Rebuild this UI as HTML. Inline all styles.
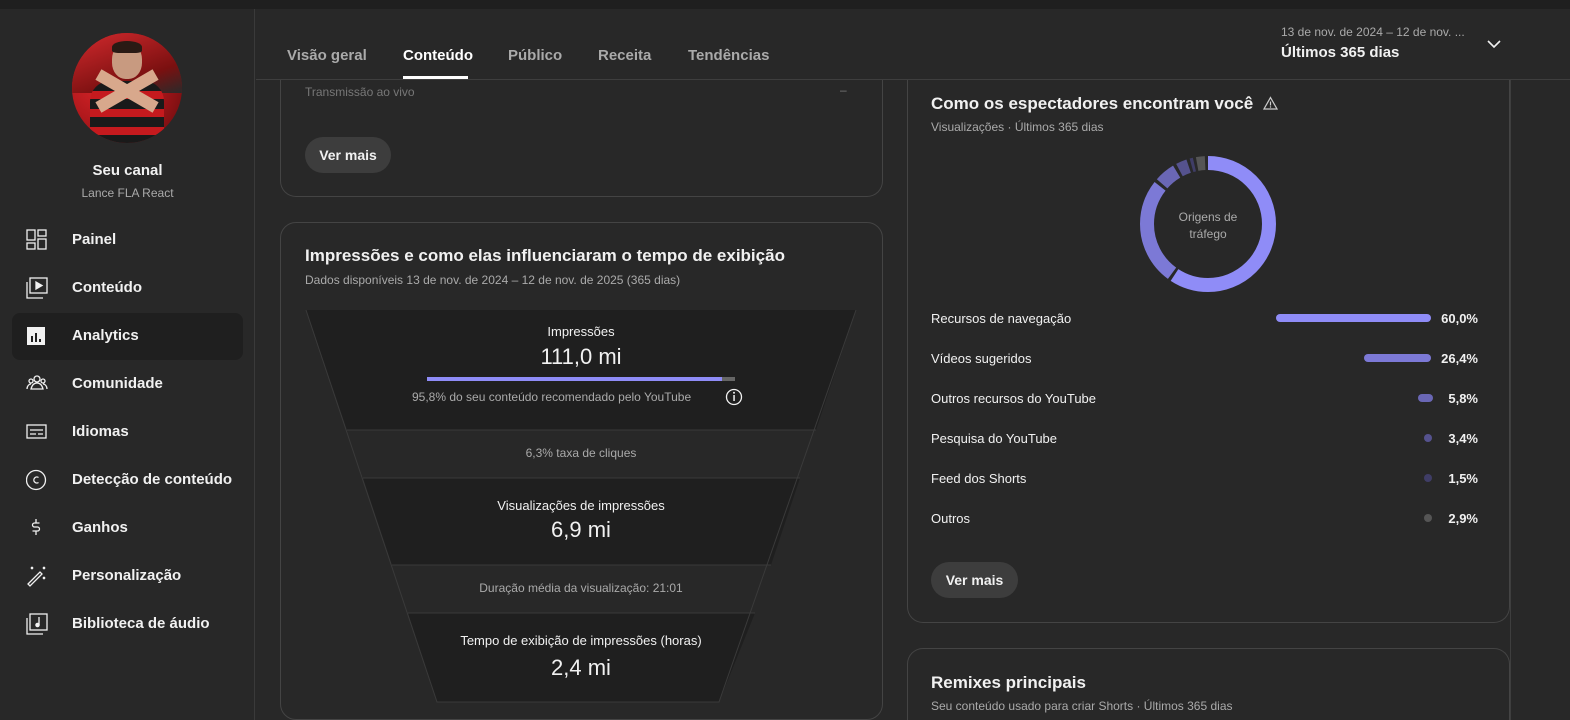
<!DOCTYPE html>
<html><head><meta charset="utf-8"><style>
*{box-sizing:border-box;margin:0;padding:0}
html,body{width:1570px;height:720px;overflow:hidden}
body{background:#282828;font-family:"Liberation Sans",sans-serif;color:#f1f1f1;position:relative}
.top{position:absolute;left:0;top:0;width:1570px;height:9px;background:#1f1f1f;z-index:5}
.side{position:absolute;left:0;top:9px;width:255px;height:711px;border-right:1px solid #3a3a3a}
.av{position:absolute;left:72px;top:33px;width:110px;height:110px;border-radius:50%;overflow:hidden;background:radial-gradient(circle at 30% 40%,#e0262a,#a01418 60%,#5a0c0c)}
.nav{position:absolute;left:0;width:255px;height:48px;font-size:15px;font-weight:bold;color:#f1f1f1}
.nav span{position:absolute;left:72px;top:15px}
.nav svg{position:absolute;left:26px;top:13px}
.abs{position:absolute}
.card{position:absolute;border:1px solid #444;border-radius:16px;background:#282828}
.btn{position:absolute;background:#3d3d3d;border-radius:18px;font-size:14px;font-weight:bold;color:#f1f1f1;text-align:center;line-height:36px}
.tab{position:absolute;top:47px;font-size:15px;font-weight:bold;color:#aaa}
.row{position:absolute;left:931px;font-size:13px;color:#f1f1f1}
.pct{position:absolute;right:92px;font-size:13px;color:#f1f1f1;font-weight:bold;text-align:right}
.bar{position:absolute;height:8px;border-radius:4px}
</style></head><body>
<div class="top"></div>
<div class="side">
  <div class="av" style="top:24px">
    <div class="abs" style="left:0;top:0;width:110px;height:60px;background:linear-gradient(160deg,#d42a2e,#7a1010 70%,#2a2a2a)"></div>
    <div class="abs" style="left:40px;top:10px;width:30px;height:36px;border-radius:45%;background:#c89a80"></div>
    <div class="abs" style="left:40px;top:8px;width:30px;height:12px;border-radius:50% 50% 20% 20%;background:#2a1a14"></div>
    <div class="abs" style="left:18px;top:48px;width:74px;height:70px;border-radius:20px 20px 0 0;background:repeating-linear-gradient(180deg,#1a1a1a 0 10px,#c51a1e 10px 18px)"></div>
    <div class="abs" style="left:22px;top:52px;width:66px;height:12px;background:#d8a88c;transform:rotate(30deg)"></div>
    <div class="abs" style="left:22px;top:52px;width:66px;height:12px;background:#d8a88c;transform:rotate(-30deg)"></div>
  </div>
  <div class="abs" style="left:0;width:255px;top:153px;text-align:center;font-size:15px;font-weight:bold">Seu canal</div>
  <div class="abs" style="left:0;width:255px;top:177px;text-align:center;font-size:12px;color:#aaa">Lance FLA React</div>
</div>
<div class="nav" style="top:216px"><svg width="22" height="22" viewBox="0 0 22 22" fill="none" stroke="#f1f1f1" stroke-width="1.3"><rect x="1" y="1" width="8" height="10"/><rect x="12" y="1" width="8" height="6"/><rect x="1" y="14" width="8" height="6"/><rect x="12" y="10" width="8" height="10"/></svg><span>Painel</span></div>
<div class="nav" style="top:264px"><svg width="22" height="22" viewBox="0 0 22 22" fill="none" stroke="#f1f1f1" stroke-width="1.3"><rect x="4" y="1" width="17" height="15"/><path d="M1 5v16h16"/><path d="M10 5l6 3.5-6 3.5z" fill="#f1f1f1"/></svg><span>Conteúdo</span></div>
<div class="abs" style="left:12px;top:313px;width:231px;height:47px;background:#1f1f1f;border-radius:8px"></div>
<div class="nav" style="top:312px"><svg width="22" height="22" viewBox="0 0 22 22"><rect x="1" y="2" width="18" height="18" fill="#f1f1f1"/><rect x="5" y="11" width="2" height="6" fill="#1f1f1f"/><rect x="9" y="8" width="2" height="9" fill="#1f1f1f"/><rect x="13" y="14" width="2" height="3" fill="#1f1f1f"/></svg><span>Analytics</span></div>
<div class="nav" style="top:360px"><svg width="22" height="22" viewBox="0 0 22 22" fill="none" stroke="#f1f1f1" stroke-width="1.3"><circle cx="11" cy="6" r="3"/><circle cx="5" cy="8" r="2"/><circle cx="17" cy="8" r="2"/><path d="M5 16c1-4 3-6 6-6s5 2 6 6zM1 16c0-3 2-5 4-5M21 16c0-3-2-5-4-5"/></svg><span>Comunidade</span></div>
<div class="nav" style="top:408px"><svg width="22" height="22" viewBox="0 0 22 22" fill="none" stroke="#f1f1f1" stroke-width="1.3"><rect x="1" y="4" width="19" height="13"/><path d="M4 9h13M4 13h6M12 13h5"/></svg><span>Idiomas</span></div>
<div class="nav" style="top:456px"><svg width="22" height="22" viewBox="0 0 22 22" fill="none" stroke="#f1f1f1" stroke-width="1.3"><circle cx="10" cy="11" r="9.5"/><path d="M12.5 8.5a3 3 0 1 0 0 5"/></svg><span>Detecção de conteúdo</span></div>
<div class="nav" style="top:504px"><svg width="22" height="22" viewBox="0 0 22 22" fill="none" stroke="#f1f1f1" stroke-width="1.3"><path d="M13.5 6h-5a2 2 0 0 0 0 4h3a2 2 0 0 1 0 4h-5M10 2v4M10 14v4"/></svg><span>Ganhos</span></div>
<div class="nav" style="top:552px"><svg width="22" height="22" viewBox="0 0 22 22" fill="none" stroke="#f1f1f1" stroke-width="1.3"><path d="M2 19l12-12 2 2-12 12z"/><path d="M5 2l2 2M7 2L5 4M17 2l2 2M19 2l-2 2M17 12l2 2M19 12l-2 2"/></svg><span>Personalização</span></div>
<div class="nav" style="top:600px"><svg width="22" height="22" viewBox="0 0 22 22" fill="none" stroke="#f1f1f1" stroke-width="1.3"><rect x="4" y="1" width="17" height="16"/><path d="M1 5v16h16"/><path d="M13 4v8" /><circle cx="11.5" cy="12" r="1.6" fill="#f1f1f1"/></svg><span>Biblioteca de áudio</span></div>

<div class="card" style="left:280px;top:40px;width:603px;height:157px;border-top:none;border-radius:0 0 16px 16px"></div>
<div class="card" style="left:907px;top:40px;width:603px;height:583px;border-top:none;border-radius:0 0 16px 16px"></div>

<div class="abs" style="left:256px;top:9px;width:1314px;height:70px;background:#282828"></div>
<div class="abs" style="left:256px;top:79px;width:1314px;height:1px;background:#3e3e3e"></div>
<div class="tab" style="left:287px">Visão geral</div>
<div class="tab" style="left:403px;color:#fff">Conteúdo</div>
<div class="abs" style="left:403px;top:76px;width:65px;height:3px;background:#fff"></div>
<div class="tab" style="left:508px">Público</div>
<div class="tab" style="left:598px">Receita</div>
<div class="tab" style="left:688px">Tendências</div>
<div class="abs" style="left:1281px;top:25px;font-size:12px;color:#aaa">13 de nov. de 2024 – 12 de nov. ...</div>
<div class="abs" style="left:1281px;top:44px;font-size:15px;font-weight:bold;color:#f1f1f1">Últimos 365 dias</div>
<svg class="abs" style="left:1486px;top:38px" width="16" height="12" viewBox="0 0 16 12"><path d="M2 3l6 6 6-6" fill="none" stroke="#f1f1f1" stroke-width="1.6"/></svg>
<div class="abs" style="left:1510px;top:80px;width:1px;height:640px;background:#3e3e3e"></div>

<div class="abs" style="left:305px;top:85px;font-size:12px;color:#777">Transmissão ao vivo</div>
<div class="abs" style="left:840px;top:83px;font-size:12px;color:#777">–</div>
<div class="btn" style="left:305px;top:137px;width:86px;height:36px">Ver mais</div>

<div class="card" style="left:280px;top:222px;width:603px;height:498px"></div>
<div class="abs" style="left:305px;top:246px;font-size:17px;font-weight:bold">Impressões e como elas influenciaram o tempo de exibição</div>
<div class="abs" style="left:305px;top:273px;font-size:12px;color:#aaa">Dados disponíveis 13 de nov. de 2024 – 12 de nov. de 2025 (365 dias)</div>
<svg class="abs" style="left:0;top:0" width="1570" height="720">
<polygon points="306,310 856,310 816,430 347,430" fill="#1f1f1f"/>
<polygon points="347,430 816,430 800,478 363,478" fill="#282828"/>
<polygon points="363,478 800,478 771,565 392,565" fill="#1f1f1f"/>
<polygon points="392,565 771,565 755,613 408,613" fill="#282828"/>
<polygon points="408,613 755,613 719,702 437,702" fill="#1f1f1f"/>
<polyline points="306,310 437,702 719,702 856,310" fill="none" stroke="#3a3a3a" stroke-width="1"/>
<line x1="347" y1="430" x2="816" y2="430" stroke="#3a3a3a"/>
<line x1="363" y1="478" x2="800" y2="478" stroke="#3a3a3a"/>
<line x1="392" y1="565" x2="771" y2="565" stroke="#3a3a3a"/>
<line x1="408" y1="613" x2="755" y2="613" stroke="#3a3a3a"/>
<rect x="427" y="377" width="295" height="4" fill="#8f8cf7"/><rect x="722" y="377" width="13" height="4" fill="#666"/>
<circle cx="734" cy="397" r="7.5" fill="none" stroke="#f1f1f1" stroke-width="1.3"/><rect x="733.3" y="395" width="1.5" height="6" fill="#f1f1f1"/><circle cx="734" cy="392.8" r="1" fill="#f1f1f1"/>
</svg>
<div class="abs" style="left:306px;width:550px;top:324px;text-align:center;font-size:13px">Impressões</div>
<div class="abs" style="left:306px;width:550px;top:344px;text-align:center;font-size:22px">111,0 mi</div>
<div class="abs" style="left:412px;top:390px;font-size:12px;color:#aaa">95,8% do seu conteúdo recomendado pelo YouTube</div>
<div class="abs" style="left:306px;width:550px;top:446px;text-align:center;font-size:12px;color:#aaa">6,3% taxa de cliques</div>
<div class="abs" style="left:306px;width:550px;top:498px;text-align:center;font-size:13px">Visualizações de impressões</div>
<div class="abs" style="left:306px;width:550px;top:517px;text-align:center;font-size:22px">6,9 mi</div>
<div class="abs" style="left:306px;width:550px;top:581px;text-align:center;font-size:12px;color:#aaa">Duração média da visualização: 21:01</div>
<div class="abs" style="left:306px;width:550px;top:633px;text-align:center;font-size:13px">Tempo de exibição de impressões (horas)</div>
<div class="abs" style="left:306px;width:550px;top:655px;text-align:center;font-size:22px">2,4 mi</div>

<div class="abs" style="left:931px;top:94px;font-size:17px;font-weight:bold">Como os espectadores encontram você</div>
<svg class="abs" style="left:1263px;top:96px" width="15" height="14" viewBox="0 0 15 14"><path d="M7.5 1.5L14 13H1z" fill="none" stroke="#ccc" stroke-width="1.2"/><path d="M7.5 5.5v4" stroke="#ccc" stroke-width="1.2"/><circle cx="7.5" cy="11" r=".7" fill="#ccc"/></svg>
<div class="abs" style="left:931px;top:120px;font-size:12px;color:#aaa">Visualizações · Últimos 365 dias</div>
<svg class="abs" style="left:1138px;top:154px" width="140" height="140" viewBox="0 0 140 140">
<g transform="rotate(-90 70 70)" fill="none" stroke-width="14">
<circle cx="70" cy="70" r="61" stroke="#8f8cf7" stroke-dasharray="227 400" stroke-dashoffset="0"/>
<circle cx="70" cy="70" r="61" stroke="#7c79d6" stroke-dasharray="98 400" stroke-dashoffset="-230"/>
<circle cx="70" cy="70" r="61" stroke="#6a67b5" stroke-dasharray="19 400" stroke-dashoffset="-331.2"/>
<circle cx="70" cy="70" r="61" stroke="#55528e" stroke-dasharray="10 400" stroke-dashoffset="-353.4"/>
<circle cx="70" cy="70" r="61" stroke="#3f3d66" stroke-dasharray="3 400" stroke-dashoffset="-366.4"/>
<circle cx="70" cy="70" r="61" stroke="#555" stroke-dasharray="8 400" stroke-dashoffset="-372.2"/>
</g></svg>
<div class="abs" style="left:1168px;width:80px;top:209px;text-align:center;font-size:12px;color:#aaa;line-height:17px">Origens de tráfego</div>

<div class="row" style="top:311px">Recursos de navegação</div>
<div class="bar" style="left:1276px;top:314px;width:155px;background:#8f8cf7"></div><div class="pct" style="top:311px">60,0%</div>
<div class="row" style="top:351px">Vídeos sugeridos</div>
<div class="bar" style="left:1364px;top:354px;width:67px;background:#7c79d6"></div><div class="pct" style="top:351px">26,4%</div>
<div class="row" style="top:391px">Outros recursos do YouTube</div>
<div class="bar" style="left:1418px;top:394px;width:15px;background:#6a67b5"></div><div class="pct" style="top:391px">5,8%</div>
<div class="row" style="top:431px">Pesquisa do YouTube</div>
<div class="bar" style="left:1424px;top:434px;width:8px;background:#55528e"></div><div class="pct" style="top:431px">3,4%</div>
<div class="row" style="top:471px">Feed dos Shorts</div>
<div class="bar" style="left:1424px;top:474px;width:8px;background:#3f3d66"></div><div class="pct" style="top:471px">1,5%</div>
<div class="row" style="top:511px">Outros</div>
<div class="bar" style="left:1424px;top:514px;width:8px;background:#555"></div><div class="pct" style="top:511px">2,9%</div>
<div class="btn" style="left:931px;top:562px;width:87px;height:36px">Ver mais</div>

<div class="card" style="left:907px;top:648px;width:603px;height:72px;border-bottom:none;border-radius:16px 16px 0 0"></div>
<div class="abs" style="left:931px;top:673px;font-size:17px;font-weight:bold">Remixes principais</div>
<div class="abs" style="left:931px;top:699px;font-size:12px;color:#aaa">Seu conteúdo usado para criar Shorts · Últimos 365 dias</div>
</body></html>
